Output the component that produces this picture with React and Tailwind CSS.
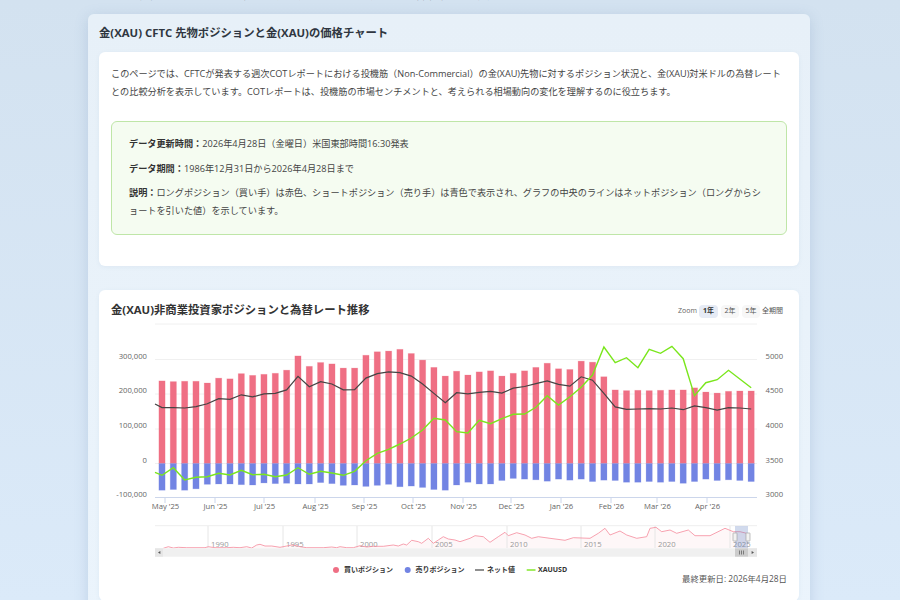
const FONT = { fontFamily: '"Open Sans", "Noto Sans CJK JP", sans-serif' };

const longs = [238, 236, 237, 237, 232, 246, 244, 259, 254, 257, 260, 269, 310, 280, 291, 287, 275, 275, 312, 322, 324, 329, 317, 298, 277, 252, 266, 255, 264, 267, 252, 260, 267, 277, 289, 273, 271, 295, 292, 250, 212, 210, 211, 210, 211, 212, 212, 218, 206, 203, 208, 209, 209];
const shorts = [77, 75, 77, 73, 60, 59, 59, 61, 62, 56, 58, 57, 59, 59, 55, 58, 63, 62, 66, 63, 60, 67, 65, 69, 75, 77, 62, 54, 59, 59, 49, 43, 45, 47, 51, 45, 48, 45, 52, 48, 49, 54, 54, 52, 54, 52, 57, 52, 45, 49, 47, 49, 52];
const gold = [475.3, 467.7, 480, 477.3, 476.7, 473.3, 475, 470.3, 474.7, 474.3, 476.7, 475, 467.7, 474.3, 471.3, 473, 475.3, 471.3, 460.7, 453.3, 449.3, 444, 438, 430, 418.3, 420, 431.7, 433, 420.3, 423.7, 418.7, 414.3, 414, 407.3, 395.7, 405, 396.7, 387.3, 375, 347, 362.7, 357.7, 367.7, 349.3, 353.3, 346.3, 358.7, 395.7, 382.7, 379.7, 370.3, 379, 387.7];

const ZERO = 463.5;
const PX = 0.347;
const barX = (i) => 162 + 11.33 * i;

const netLine = ['155,404', ...longs.map((l, i) => `${barX(i).toFixed(1)},${(ZERO - (l - shorts[i]) * PX).toFixed(1)}`)].join(' ');
const goldLine = ['155,472.3', ...gold.map((y, i) => `${barX(i).toFixed(1)},${y}`)].join(' ');

const navA = [[70, 100], [85, 95], [100, 99], [115, 97], [140, 98], [195, 98], [205, 95], [225, 98], [260, 98], [280, 97], [300, 98], [320, 95], [335, 99], [350, 90], [360, 88], [375, 93], [395, 93], [420, 97], [440, 93], [455, 90], [470, 92], [480, 95], [500, 98], [550, 98], [575, 96], [590, 98], [600, 95], [620, 98], [640, 98], [660, 92], [680, 96], [700, 94], [730, 94], [760, 90], [775, 93], [790, 87], [800, 90], [815, 76], [835, 80], [845, 85], [865, 70], [880, 85], [895, 75], [910, 65], [925, 72], [945, 75], [960, 80], [975, 75]];
const navB = [[0, 70], [15, 62], [40, 65], [60, 82], [85, 65], [105, 52], [115, 62], [140, 53], [165, 60], [185, 70], [205, 65], [240, 70], [285, 76], [310, 68], [360, 70], [385, 55], [405, 40], [420, 60], [450, 48], [470, 60], [500, 70], [530, 65], [540, 40], [558, 37], [575, 50], [600, 45], [620, 55], [655, 45], [675, 62], [720, 62], [765, 40], [790, 50], [810, 50], [830, 55]];
const navPts = [
  ...navA.map(([x, y]) => [140 + x / 3, 515 + y / 3]),
  ...navB.map(([x, y]) => [470 + x / 3, 515 + y / 3]),
].map(([x, y]) => `${x.toFixed(1)},${y.toFixed(1)}`).join(' ');

const leftLabels = [['300,000', 359.5], ['200,000', 394], ['100,000', 429], ['0', 463.5], ['-100,000', 497.5]];
const rightLabels = [['5000', 359.5], ['4500', 394], ['4000', 429], ['3500', 463.5], ['3000', 497.5]];
const months = [["May '25", 165], ["Jun '25", 215], ["Jul '25", 264], ["Aug '25", 315], ["Sep '25", 364], ["Oct '25", 413], ["Nov '25", 463], ["Dec '25", 511], ["Jan '26", 561], ["Feb '26", 611], ["Mar '26", 657], ["Apr '26", 707]];
const years = [['1990', 208], ['1995', 283], ['2000', 357], ['2005', 432], ['2010', 507], ['2015', 581], ['2020', 655], ['2025', 730]];

function PositionChart() {
  return (
    <svg viewBox="111 323 676 250" className="block w-[676px] h-[250px]">
      {[324, 359.5, 394, 429, 463.5].map((y) => (
        <line key={y} x1="155" x2="757" y1={y} y2={y} stroke="#f0f0f0" strokeWidth="1" />
      ))}

      {longs.map((l, i) => (
        <rect key={i} x={barX(i) - 3.1} y={ZERO - l * PX} width="6.2" height={l * PX} fill="#ef6f84" stroke="#ef6f84" strokeOpacity="0.25" strokeWidth="0.8" />
      ))}
      {shorts.map((s, i) => (
        <rect key={i} x={barX(i) - 3.1} y={ZERO} width="6.2" height={s * PX} fill="#7284e3" stroke="#7284e3" strokeOpacity="0.25" strokeWidth="0.8" />
      ))}

      <polyline points={netLine} fill="none" stroke="#444" strokeWidth="1.2" />
      <polyline points={goldLine} fill="none" stroke="#7ae61c" strokeWidth="1.4" />

      <line x1="155" x2="757" y1="497.5" y2="497.5" stroke="#ccd6eb" />
      {months.map(([label, x]) => (
        <g key={label}>
          <line x1={x} x2={x} y1="497.5" y2="503" stroke="#ccd6eb" />
          <text x={x + 0.5} y="508.7" textAnchor="middle" fontSize="7.7" fill="#666">{label}</text>
        </g>
      ))}

      {leftLabels.map(([label, y]) => (
        <text key={label} x="147" y={y - 0.8} textAnchor="end" fontSize="7.7" fill="#666">{label}</text>
      ))}
      {rightLabels.map(([label, y]) => (
        <text key={label} x="765.5" y={y - 0.8} fontSize="7.7" fill="#666">{label}</text>
      ))}

      {/* navigator */}
      <line x1="155" x2="757" y1="525.7" y2="525.7" stroke="#eeeeee" />
      <polygon points={`163,548 ${navPts} 748,548`} fill="#ef6f84" fillOpacity="0.06" />
      {years.map(([label, x]) => (
        <g key={label}>
          <line x1={x} x2={x} y1="526" y2="548" stroke="#e6e6e6" />
          <text x={x + 3} y="546.5" fontSize="7.7" fill="#999">{label}</text>
        </g>
      ))}
      <polyline points={navPts} fill="none" stroke="#f58a9c" strokeWidth="0.8" />
      <rect x="735" y="526" width="13" height="22" fill="#6685c2" fillOpacity="0.3" />
      <rect x="733" y="533" width="4" height="8" rx="0.5" fill="#f2f2f2" stroke="#999" strokeWidth="0.6" />
      <rect x="746" y="533" width="4" height="8" rx="0.5" fill="#f2f2f2" stroke="#999" strokeWidth="0.6" />

      <rect x="155" y="548.3" width="602" height="8.4" fill="#f0f0f0" />
      <rect x="155" y="548.3" width="8" height="8.4" fill="#e6e6e6" />
      <polygon points="160.4,550.9 160.4,554.1 158,552.5" fill="#555" />
      <rect x="735" y="548.3" width="13" height="8.4" fill="#cccccc" />
      <path d="M739.5 550.5v4M741.5 550.5v4M743.5 550.5v4" stroke="#444" strokeWidth="0.6" />
      <rect x="748" y="548.3" width="9" height="8.4" fill="#e6e6e6" />
      <polygon points="751.6,550.9 751.6,554.1 754,552.5" fill="#555" />

      {/* legend */}
      <circle cx="336" cy="570" r="3" fill="#ef6f84" />
      <text x="344" y="572.4" fontSize="7" fontWeight="700" fill="#333">買いポジション</text>
      <circle cx="407.7" cy="570" r="3" fill="#7284e3" />
      <text x="415.5" y="572.4" fontSize="7" fontWeight="700" fill="#333">売りポジション</text>
      <line x1="475" x2="484" y1="570" y2="570" stroke="#444" strokeWidth="1.2" />
      <text x="487" y="572.4" fontSize="7" fontWeight="700" fill="#333">ネット値</text>
      <line x1="526.7" x2="535.5" y1="570" y2="570" stroke="#7ae61c" strokeWidth="1.4" />
      <text x="538" y="572.4" fontSize="7" fontWeight="700" fill="#333">XAUUSD</text>
    </svg>
  );
}

export default function App() {
  return (
    <div className="h-[600px] overflow-hidden bg-gradient-to-b from-[#d3e2f0] to-[#dbeaf9]" style={FONT}>
      <div className="h-[3px] ml-[88px] overflow-hidden flex items-end text-[9.17px] leading-[14px] text-[#555]">
        <p className="whitespace-nowrap"><span className="text-[#4caf50]">✔</span> 金(XAU)の先物ポジションと価格の推移を毎週更新しています。最新データは米国東部時間で発表</p>
      </div>

      <div className="ml-[88px] mt-[11px] w-[722px] rounded-md bg-gradient-to-b from-[#e7f0f8] to-[#ebf4fc] px-[11px] pt-[11px] pb-6 shadow-[0_3px_14px_rgba(90,125,170,0.22)]">
        <h2 className="text-[11.35px] leading-[16px] font-bold text-[#2f3640]">金(XAU) CFTC 先物ポジションと金(XAU)の価格チャート</h2>

        <div className="mt-[11px] h-[214px] rounded-md bg-white px-3 pt-[12.5px] shadow-[0_1px_4px_rgba(90,125,170,0.08)]">
          <p className="text-[9.17px] leading-[18.2px] text-[#444]">
            このページでは、CFTCが発表する週次COTレポートにおける投機筋（Non-Commercial）の金(XAU)先物に対するポジション状況と、金(XAU)対米ドルの為替レートとの比較分析を表示しています。COTレポートは、投機筋の市場センチメントと、考えられる相場動向の変化を理解するのに役立ちます。
          </p>
          <div className="mt-[20px] h-[114px] rounded-md border border-[#bfe6a8] bg-[#f5fcf1] px-[17px] pt-[13.5px] text-[9.17px] leading-[18.2px] text-[#444]">
            <p><strong className="text-[#333]">データ更新時間：</strong>2026年4月28日（金曜日）米国東部時間16:30発表</p>
            <p className="mt-[6px]"><strong className="text-[#333]">データ期間：</strong>1986年12月31日から2026年4月28日まで</p>
            <p className="mt-[6px]"><strong className="text-[#333]">説明：</strong>ロングポジション（買い手）は赤色、ショートポジション（売り手）は青色で表示され、グラフの中央のラインはネットポジション（ロングからショートを引いた値）を示しています。</p>
          </div>
        </div>

        <div className="mt-6 rounded-md bg-white px-3 pt-[12px] pb-4 shadow-[0_1px_4px_rgba(90,125,170,0.08)]">
          <div className="h-[21px] flex justify-between">
            <h3 className="text-[11.35px] leading-[16px] font-bold text-[#333]">金(XAU)非商業投資家ポジションと為替レート推移</h3>
            <div className="mt-[3px] mr-[4px] h-[13px] flex items-center text-[7px] text-[#555]">
              <span className="mr-[2px] text-[#666]">Zoom</span>
              <span className="h-[13px] w-[19px] flex items-center justify-center rounded-sm bg-[#e6ebf5] font-bold text-[#333]">1年</span>
              <span className="ml-[3px] h-[13px] w-[18px] flex items-center justify-center rounded-sm bg-[#f7f7f7]">2年</span>
              <span className="ml-[3px] h-[13px] w-[18px] flex items-center justify-center rounded-sm bg-[#f7f7f7]">5年</span>
              <span className="ml-[2px]">全期間</span>
            </div>
          </div>
          <PositionChart />
          <p className="text-right text-[8.4px] leading-[12px] text-[#555]">最終更新日: 2026年4月28日</p>
        </div>
      </div>
    </div>
  );
}
